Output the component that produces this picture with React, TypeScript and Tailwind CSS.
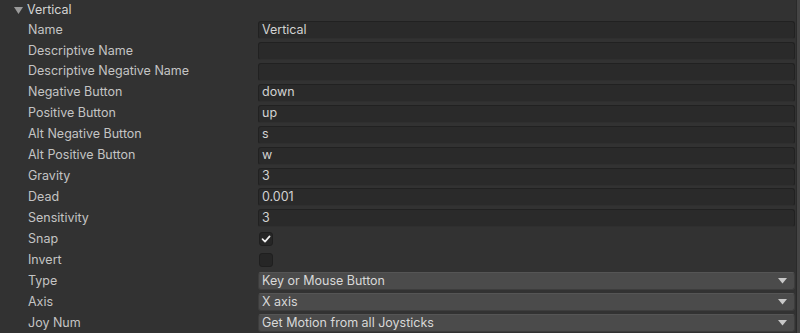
import React from "react";

type Row =
  | { label: string; kind: "text"; value: string }
  | { label: string; kind: "check"; value: boolean }
  | { label: string; kind: "select"; value: string };

const rows: Row[] = [
  { label: "Name", kind: "text", value: "Vertical" },
  { label: "Descriptive Name", kind: "text", value: "" },
  { label: "Descriptive Negative Name", kind: "text", value: "" },
  { label: "Negative Button", kind: "text", value: "down" },
  { label: "Positive Button", kind: "text", value: "up" },
  { label: "Alt Negative Button", kind: "text", value: "s" },
  { label: "Alt Positive Button", kind: "text", value: "w" },
  { label: "Gravity", kind: "text", value: "3" },
  { label: "Dead", kind: "text", value: "0.001" },
  { label: "Sensitivity", kind: "text", value: "3" },
  { label: "Snap", kind: "check", value: true },
  { label: "Invert", kind: "check", value: false },
  { label: "Type", kind: "select", value: "Key or Mouse Button" },
  { label: "Axis", kind: "select", value: "X axis" },
  { label: "Joy Num", kind: "select", value: "Get Motion from all Joysticks" },
];

function Field({ row }: { row: Row }) {
  if (row.kind === "text") {
    return (
      <div className="flex-1 h-[18px] rounded-[3px] bg-[#2a2a2a] border border-[#212121] border-b-[#2f2f2f] flex items-center pl-[3px] text-[#d2d2d2]">
        {row.value}
      </div>
    );
  }
  if (row.kind === "check") {
    return (
      <div className="w-[14px] h-[14px] ml-[1px] rounded-[3px] bg-[#262626] border border-[#1f1f1f] flex items-center justify-center">
        {row.value && (
          <svg width="10" height="10" viewBox="0 0 10 10">
            <path d="M1.5 5.2 L4 7.6 L8.6 2.4" fill="none" stroke="#f0f0f0" strokeWidth="1.7" strokeLinecap="round" strokeLinejoin="round" />
          </svg>
        )}
      </div>
    );
  }
  return (
    <div className="flex-1 h-[18px] rounded-[3px] bg-[#4b4b4b] border border-[#3d3d3d] border-t-[#555555] flex items-center pl-[3px] pr-[7px] text-[#d8d8d8]">
      <span className="flex-1">{row.value}</span>
      <svg width="9" height="6" viewBox="0 0 9 6">
        <path d="M0 0 L9 0 L4.5 5.5 Z" fill="#c8c8c8" />
      </svg>
    </div>
  );
}

export default function App() {
  return (
    <div
      className="w-[800px] h-[333px] bg-[#323232] flex overflow-hidden text-[12.5px]"
      style={{ fontFamily: "Inter, 'Noto Sans', sans-serif" }}
    >
      <div className="flex-1 flex flex-col">
        <div className="h-[19.5px] shrink-0 flex items-center pl-[14px] pt-[1px]">
          <svg width="9" height="7" viewBox="0 0 9 7" className="mr-[4px]">
            <path d="M0 0 L9 0 L4.5 7 Z" fill="#9a9a9a" />
          </svg>
          <span className="text-[#d4d4d4]">Vertical</span>
        </div>
        {rows.map((r) => (
          <div key={r.label} className="h-[20.95px] shrink-0 flex items-center pl-[28px] pr-[1px]">
            <div className="w-[230px] text-[#c4c4c4]">{r.label}</div>
            <Field row={r} />
          </div>
        ))}
      </div>
      <div className="w-[4px] bg-[#454545] border-l border-[#2a2a2a]" />
    </div>
  );
}
